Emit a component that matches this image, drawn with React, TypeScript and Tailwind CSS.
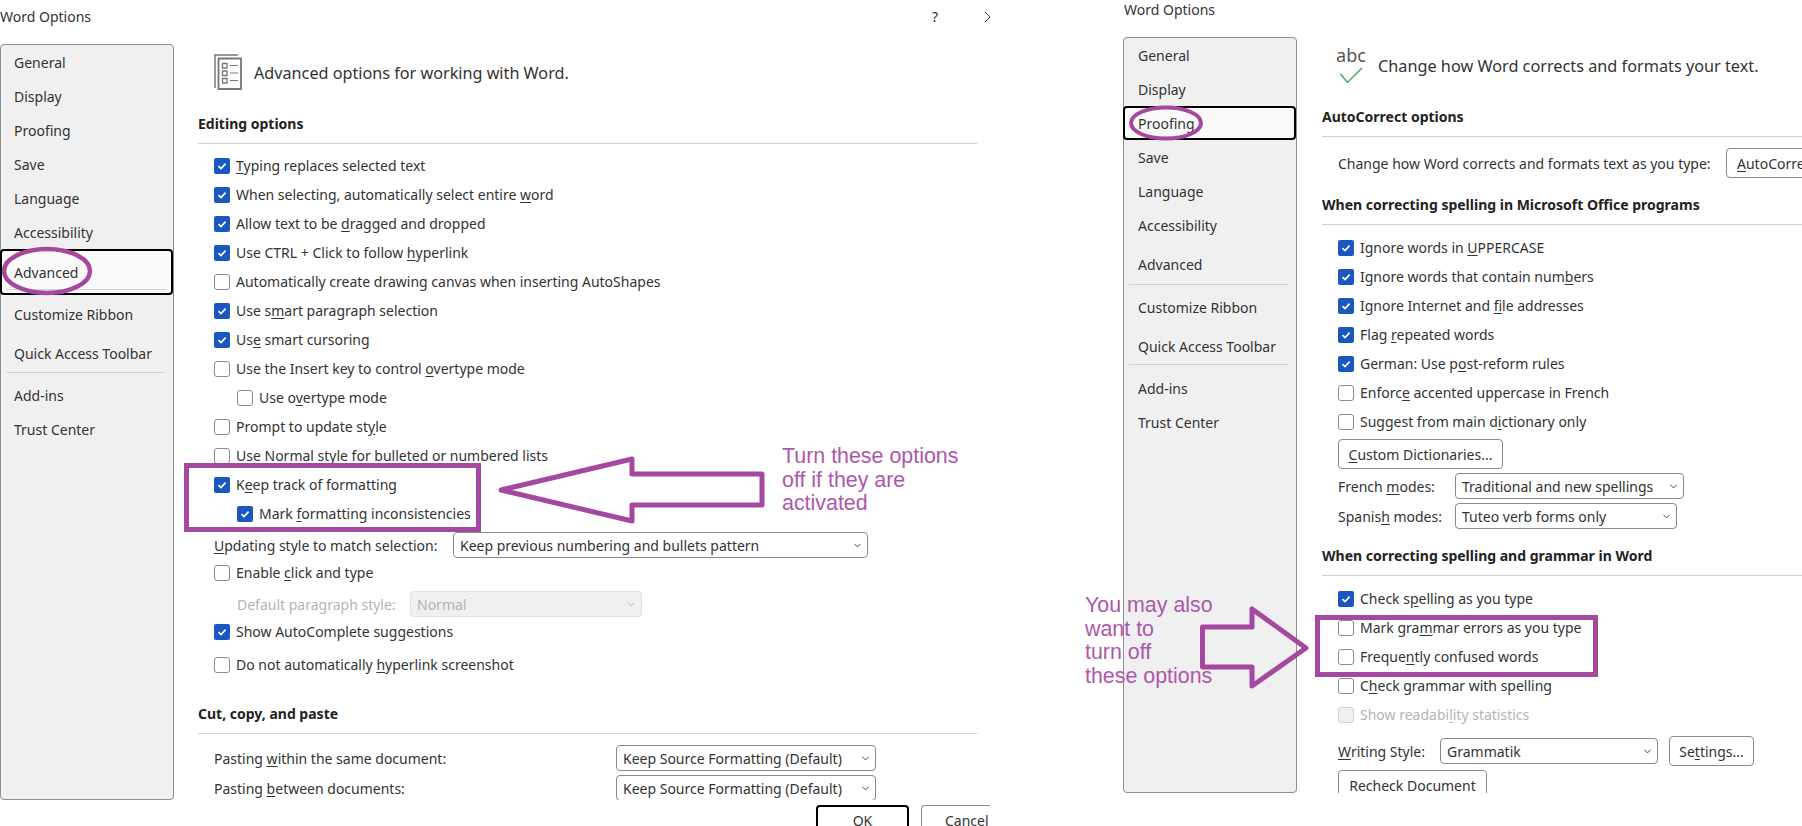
import React from 'react';
import { ChevronDown } from 'lucide-react';

const PURPLE = '#a5489f';

const Check: React.FC<{ on?: boolean; disabled?: boolean }> = ({ on, disabled }) => {
  if (on) {
    return (
      <span className="flex h-4 w-4 shrink-0 items-center justify-center rounded-[2px] bg-[#1b57c0]">
        <svg width="12" height="12" viewBox="0 0 12 12" fill="none">
          <path d="M2.5 6.2 5 8.6 9.6 3.6" stroke="#fff" strokeWidth="1.6" />
        </svg>
      </span>
    );
  }
  return (
    <span
      className={
        disabled
          ? 'block h-4 w-4 shrink-0 rounded-[3px] border border-[#d0d0d0] bg-[#f0f0f0]'
          : 'block h-4 w-4 shrink-0 rounded-[3px] border border-[#8a8a8a] bg-white'
      }
    />
  );
};

const Row: React.FC<{
  on?: boolean;
  disabled?: boolean;
  sub?: boolean;
  className?: string;
  children: React.ReactNode;
}> = ({ on, disabled, sub, className, children }) => (
  <div className={`flex h-[29px] items-center gap-[6px] ${sub ? 'pl-[39px]' : 'pl-4'} ${disabled ? 'text-[#b4b4b4]' : ''} ${className ?? ''}`}>
    <Check on={on} disabled={disabled} />
    <span>{children}</span>
  </div>
);

const Select: React.FC<{ className?: string; disabled?: boolean; children: React.ReactNode }> = ({ className, disabled, children }) => (
  <div
    className={`flex h-[26px] shrink-0 items-center justify-between rounded-[4px] border pl-[6px] pr-[4px] ${
      disabled ? 'border-[#e0e0e0] bg-[#f0f0f0] text-[#b4b4b4]' : 'border-[#8a8a8a] bg-white'
    } ${className ?? ''}`}
  >
    <span>{children}</span>
    <ChevronDown size={11} strokeWidth={2} color={disabled ? '#b4b4b4' : '#333'} />
  </div>
);

const Button: React.FC<{ className?: string; children: React.ReactNode }> = ({ className, children }) => (
  <div className={`flex items-center justify-center rounded-[4px] border border-[#8a8a8a] bg-white ${className ?? ''}`}>
    {children}
  </div>
);

const SectionTitle: React.FC<{ className?: string; children: React.ReactNode }> = ({ className, children }) => (
  <div className={`flex h-[38px] items-center border-b border-[#d0d0d0] pb-[3px] font-bold text-[#222] ${className ?? ''}`}>
    {children}
  </div>
);

const NavItem: React.FC<{ className?: string; children: React.ReactNode }> = ({ className, children }) => (
  <div className={`flex items-center pl-[13px] ${className ?? 'h-[34px]'}`}>{children}</div>
);

const SelectedNav: React.FC<{ className?: string; children: React.ReactNode }> = ({ className, children }) => (
  <div className={`-ml-px flex items-center rounded-[4px] border-2 border-black bg-[#fafafa] pl-3 ${className ?? ''}`}>
    {children}
  </div>
);

const Sep = () => <div className="ml-[5px] mr-[8px] h-px bg-[#d2d2d2]" />;

const AdvancedSidebar = () => (
  <div className="h-full w-[174px] shrink-0 rounded-[4px] border border-[#8e8e8e] bg-[#f0f0f0]">
    <NavItem>General</NavItem>
    <NavItem>Display</NavItem>
    <NavItem>Proofing</NavItem>
    <NavItem>Save</NavItem>
    <NavItem>Language</NavItem>
    <NavItem>Accessibility</NavItem>
    <SelectedNav className="relative h-[46px]">
      Advanced
      <div className="absolute bottom-[3px] left-[4px] right-[5px] h-px bg-[#d2d2d2]" />
    </SelectedNav>
    <NavItem className="h-[39px]">Customize Ribbon</NavItem>
    <NavItem className="h-[38px]">Quick Access Toolbar</NavItem>
    <Sep />
    <NavItem className="mt-[5px] h-[34px]">Add-ins</NavItem>
    <NavItem>Trust Center</NavItem>
  </div>
);

const ProofingSidebar = () => (
  <div className="h-full w-[174px] shrink-0 rounded-[4px] border border-[#8e8e8e] bg-[#f0f0f0]">
    <NavItem className="h-[34px] !pl-[14px]">General</NavItem>
    <NavItem className="h-[34px] !pl-[14px]">Display</NavItem>
    <SelectedNav className="h-[34px] !pl-[13px]">Proofing</SelectedNav>
    <NavItem className="h-[34px] !pl-[14px]">Save</NavItem>
    <NavItem className="h-[34px] !pl-[14px]">Language</NavItem>
    <NavItem className="h-[34px] !pl-[14px]">Accessibility</NavItem>
    <NavItem className="h-[42px] !pl-[14px] pt-[3px]">Advanced</NavItem>
    <Sep />
    <NavItem className="h-[44px] !pl-[14px]">Customize Ribbon</NavItem>
    <NavItem className="h-[35px] !pl-[14px]">Quick Access Toolbar</NavItem>
    <Sep />
    <NavItem className="mt-[6px] h-[34px] !pl-[14px]">Add-ins</NavItem>
    <NavItem className="h-[34px] !pl-[14px]">Trust Center</NavItem>
  </div>
);

const AdvancedIcon = () => (
  <svg width="28" height="36" viewBox="0 0 28 36" fill="none" stroke="#777" strokeWidth="1.5" className="mb-[2px] shrink-0">
    <path d="M1 34V1H24" />
    <path d="M4.500 35V4.500H27V35Z" strokeWidth="1.8" />
    <path d="M8.500 9.500h4.500v4.500H8.500ZM8.500 17h4.500v4.500H8.500ZM8.500 24.500h4.500v4.500H8.500Z" strokeWidth="1.3" />
    <path d="M16 11.500h8M16 19h8M16 26.500h8" strokeWidth="1.2" />
  </svg>
);

const LeftDialog = () => (
  <div className="relative h-[826px] w-[990px] shrink-0 overflow-hidden">
    <div className="flex h-[33px] items-center justify-between">
      <span>Word Options</span>
      <div className="-mr-[5px] flex items-center gap-[47px]">
        <span>?</span>
        <svg width="10" height="10" viewBox="0 0 10 10" stroke="#333" strokeWidth="1">
          <path d="M0 0 10 10M10 0 0 10" />
        </svg>
      </div>
    </div>
    <div className="mt-[11px] flex h-[756px]">
      <AdvancedSidebar />
      <div className="ml-[24px] h-[756px] w-[779px] overflow-hidden">
        <div className="mt-[6px] flex h-[46px] items-center gap-[12px] pl-4">
          <AdvancedIcon />
          <span className="text-[16.2px]">Advanced options for working with Word.</span>
        </div>
        <SectionTitle className="mt-[10px]">Editing options</SectionTitle>
        <div className="mt-[7px]">
          <Row on><u>T</u>yping replaces selected text</Row>
          <Row on>When selecting, automatically select entire <u>w</u>ord</Row>
          <Row on>Allow text to be <u>d</u>ragged and dropped</Row>
          <Row on>Use CTRL + Click to follow <u>h</u>yperlink</Row>
          <Row>Automatically create drawing canvas when inserting AutoShapes</Row>
          <Row on>Use s<u>m</u>art paragraph selection</Row>
          <Row on>Us<u>e</u> smart cursoring</Row>
          <Row>Use the Insert key to control <u>o</u>vertype mode</Row>
          <Row sub>Use o<u>v</u>ertype mode</Row>
          <Row>Prompt to update st<u>y</u>le</Row>
          <Row>Use <u>N</u>ormal style for bulleted or numbered lists</Row>
          <Row on>K<u>e</u>ep track of formatting</Row>
          <Row on sub>Mark <u>f</u>ormatting inconsistencies</Row>
          <div className="mt-[4px] flex h-[26px] items-center pl-4">
            <span className="w-[239px]"><u>U</u>pdating style to match selection:</span>
            <Select className="w-[415px]">Keep previous numbering and bullets pattern</Select>
          </div>
          <Row>Enable <u>c</u>lick and type</Row>
          <div className="mt-[4px] flex h-[26px] items-center pl-[39px] text-[#b4b4b4]">
            <span className="w-[173px]">Default paragraph style:</span>
            <Select disabled className="w-[232px]">Normal</Select>
          </div>
          <Row on>Show AutoComplete suggestions</Row>
          <Row className="mt-[4px]">Do not automatically <u>h</u>yperlink screenshot</Row>
        </div>
        <SectionTitle className="mt-[17px]">Cut, copy, and paste</SectionTitle>
        <div className="mt-[11px] flex flex-col gap-1">
          <div className="flex items-center pl-4">
            <span className="w-[402px]">Pasting <u>w</u>ithin the same document:</span>
            <Select className="w-[260px]">Keep Source Formatting (Default)</Select>
          </div>
          <div className="flex items-center pl-4">
            <span className="w-[402px]">Pasting <u>b</u>etween documents:</span>
            <Select className="w-[260px]">Keep Source Formatting (Default)</Select>
          </div>
        </div>
      </div>
    </div>
    <div className="mt-[5px] flex justify-end gap-3">
      <div className="flex h-[40px] w-[93px] justify-center rounded-[4px] border-2 border-black bg-white pt-[3px]">OK</div>
      <div className="h-[40px] w-[69px] rounded-l-[4px] border border-r-0 border-[#8a8a8a] bg-white pl-[23px] pt-[4px]">Cancel</div>
    </div>

    {/* annotations */}
    <svg className="absolute left-0 top-[245px]" width="96" height="54" fill="none">
      <ellipse cx="47" cy="26" rx="43" ry="22" stroke={PURPLE} strokeWidth="4.5" />
    </svg>
    <div className="absolute left-[184px] top-[463px] h-[69px] w-[297px] border-[5px] border-[#a5489f]" />
    <svg className="absolute left-[495px] top-[450px]" width="275" height="80" fill="none">
      <path d="M6 40 137 9V24H267V55H137V71Z" stroke={PURPLE} strokeWidth="5" strokeLinejoin="round" />
    </svg>
    <div className="absolute left-[782px] top-[445px] font-['Liberation_Sans',sans-serif] text-[21.4px] leading-[23.7px] text-[#ae58ab]">
      Turn these options<br />off if they are<br />activated
    </div>
  </div>
);

const ProofIcon = () => (
  <div className="flex h-[44px] w-[32px] shrink-0 flex-col items-center">
    <span className="-mt-px h-[25px] text-[18px] leading-[24px] text-[#555]">abc</span>
    <svg width="24" height="18" viewBox="0 0 24 18" fill="none" className="-mt-[1px]">
      <path d="M1.500 7 8.500 15.500 23 1" stroke="#4aa564" strokeWidth="1.5" />
    </svg>
  </div>
);

const RightDialog = () => (
  <div className="relative -mt-[7px] ml-[133px] h-[800px] w-[679px] shrink-0">
    <div className="flex h-[33px] items-center pl-px">Word Options</div>
    <div className="mt-[11px] flex h-[756px]">
      <ProofingSidebar />
      <div className="ml-[25px] h-[756px] w-[480px] overflow-hidden">
        <div className="mt-[6px] flex h-[46px] items-center gap-[11px] pl-[13px]">
          <ProofIcon />
          <span className="text-[16.25px] whitespace-nowrap">Change how Word corrects and formats your text.</span>
        </div>
        <SectionTitle className="mt-[10px]">AutoCorrect options</SectionTitle>
        <div className="mt-[11px] flex h-[30px] items-center pl-4 whitespace-nowrap">
          <span className="w-[388px] shrink-0">Change how Word corrects and formats text as you type:</span>
          <Button className="h-[30px] w-[150px] shrink-0 !justify-start pl-[10px]"><span><u>A</u>utoCorrect Options...</span></Button>
        </div>
        <SectionTitle className="mt-[9px]">When correcting spelling in Microsoft Office programs</SectionTitle>
        <div className="mt-[8px]">
          <Row on>Ignore words in <u>U</u>PPERCASE</Row>
          <Row on>Ignore words that contain num<u>b</u>ers</Row>
          <Row on>Ignore Internet and <u>f</u>ile addresses</Row>
          <Row on>Flag <u>r</u>epeated words</Row>
          <Row on>German: Use p<u>o</u>st-reform rules</Row>
          <Row>Enforc<u>e</u> accented uppercase in French</Row>
          <Row>Suggest from main d<u>i</u>ctionary only</Row>
        </div>
        <div className="mt-[3px] pl-4">
          <Button className="h-[30px] w-[165px]"><span><u>C</u>ustom Dictionaries...</span></Button>
        </div>
        <div className="mt-[4px] flex flex-col gap-1 pl-4">
          <div className="flex items-center">
            <span className="w-[117px]">French <u>m</u>odes:</span>
            <Select className="w-[229px]">Traditional and new spellings</Select>
          </div>
          <div className="flex items-center">
            <span className="w-[117px]">Spanis<u>h</u> modes:</span>
            <Select className="w-[222px]">Tuteo verb forms only</Select>
          </div>
        </div>
        <SectionTitle className="mt-[9px]">When correcting spelling and grammar in Word</SectionTitle>
        <div className="mt-[8px]">
          <Row on>Check s<u>p</u>elling as you type</Row>
          <Row>Mark gra<u>m</u>mar errors as you type</Row>
          <Row>Freque<u>n</u>tly confused words</Row>
          <Row>C<u>h</u>eck grammar with spelling</Row>
          <Row disabled>Show readabi<u>l</u>ity statistics</Row>
        </div>
        <div className="mt-[7px] flex items-center pl-4">
          <span className="w-[102px]"><u>W</u>riting Style:</span>
          <Select className="w-[218px]">Grammatik</Select>
          <Button className="ml-[11px] h-[30px] w-[85px]"><span>Se<u>t</u>tings...</span></Button>
        </div>
        <div className="mt-[4px] pl-4">
          <Button className="h-[30px] w-[149px]"><span>Rechec<u>k</u> Document</span></Button>
        </div>
      </div>
    </div>

    {/* annotations */}
    <svg className="absolute left-0 top-[107px]" width="90" height="46" fill="none">
      <ellipse cx="43" cy="23" rx="35" ry="15.500" stroke={PURPLE} strokeWidth="4" />
    </svg>
    <div className="absolute left-[192px] top-[622px] h-[62px] w-[283px] border-[5px] border-[#a5489f]" />
    <svg className="absolute left-[72px] top-[611px]" width="115" height="88" fill="none">
      <path d="M7.500 23V63H57V82L111 44 57 5V23Z" stroke={PURPLE} strokeWidth="5" strokeLinejoin="round" />
    </svg>
    <div className="absolute -left-[38px] top-[601px] font-['Liberation_Sans',sans-serif] text-[21.4px] leading-[23.7px] text-[#ae58ab]">
      You may also<br />want to<br />turn off<br />these options
    </div>
  </div>
);

export default function App() {
  return (
    <div className="flex h-[826px] w-[1802px] overflow-hidden bg-white font-['Noto_Sans',sans-serif] text-[14px] text-[#333] [&_u]:underline-offset-2">
      <LeftDialog />
      <RightDialog />
    </div>
  );
}
